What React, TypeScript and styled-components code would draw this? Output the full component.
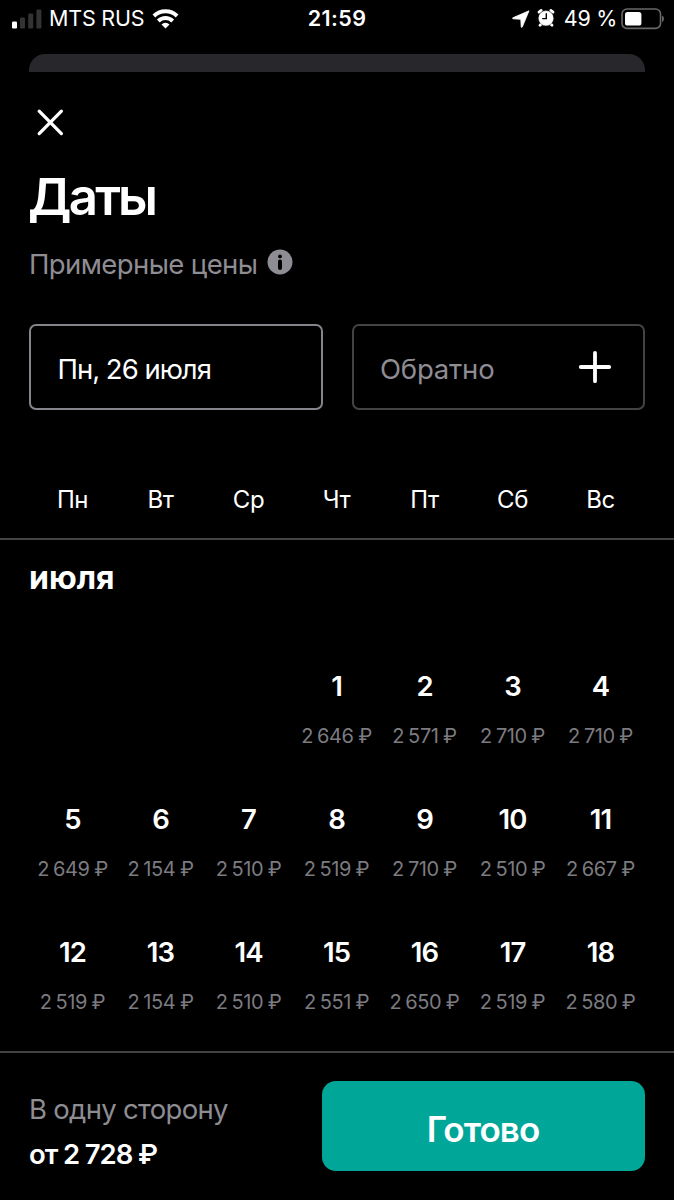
import React from "react";
import styled, { createGlobalStyle } from "styled-components";

const GlobalStyle = createGlobalStyle`
  * { box-sizing: border-box; }
  html, body { margin: 0; background: #000; }
  body { font-family: Inter, "Liberation Sans", sans-serif; color: #fff; }
`;

const Screen = styled.div`
  width: 674px;
  height: 1200px;
  display: flex;
  flex-direction: column;
  background: #000;
  overflow: hidden;
`;

const StatusBar = styled.header`
  height: 54px;
  flex: none;
  display: grid;
  grid-template-columns: 1fr auto 1fr;
  align-items: start;
  padding: 0 10px 0 12px;
`;

const StatusGroup = styled.div<{ $end?: boolean }>`
  display: flex;
  align-items: center;
  height: 37px;
  justify-content: ${(p) => (p.$end ? "flex-end" : "flex-start")};
`;

const StatusText = styled.span<{ $strong?: boolean; $spacing: number }>`
  font-size: 21.5px;
  line-height: 37px;
  font-weight: ${(p) => (p.$strong ? 600 : 400)};
  letter-spacing: ${(p) => p.$spacing}px;
  white-space: nowrap;
`;

const Clock = styled(StatusText)`
  margin-left: -2px;
`;

const Carrier = styled(StatusText)`
  margin: 0 8px 0 7px;
`;

const BatteryLevel = styled(StatusText)`
  margin: 0 4px 0 9px;
`;

const BackSheet = styled.div`
  height: 18px;
  flex: none;
  margin: 0 29px;
  border-radius: 16px 16px 0 0;
  background: #28272c;
`;

const Head = styled.section`
  flex: none;
  height: 252px;
  padding: 36px 29px 0;
  display: flex;
  flex-direction: column;
  align-items: flex-start;
`;

const CloseButton = styled.button`
  border: 0;
  padding: 0;
  margin-left: 7px;
  background: none;
  display: block;
  height: 29px;
`;

const Title = styled.h1`
  margin: 30px 0 0 -1px;
  font-size: 51px;
  line-height: 60px;
  font-weight: 620;
  letter-spacing: -2.8px;
`;

const Subtitle = styled.div`
  display: flex;
  align-items: center;
  gap: 10px;
  height: 40px;
  margin-top: 17px;
  font-size: 27.5px;
  line-height: 40px;
  color: #8e8d93;
  letter-spacing: -0.6px;

  svg { margin-top: -5px; }
`;

const Fields = styled.div`
  flex: none;
  display: grid;
  grid-template-columns: 1fr 1fr;
  gap: 29px;
  padding: 0 29px;
`;

const Field = styled.button<{ $active?: boolean }>`
  height: 86px;
  display: flex;
  align-items: center;
  justify-content: space-between;
  padding: 0 30px 0 26.5px;
  border: 2px solid ${(p) => (p.$active ? "#85848a" : "#434345")};
  border-radius: 7px;
  background: #000;
  color: ${(p) => (p.$active ? "#fff" : "#8e8d93")};
  font: 400 27.5px/40px Inter, sans-serif;
  letter-spacing: ${(p) => (p.$active ? -1 : -0.2)}px;
`;

const FieldLabel = styled.span`
  padding-top: 4px;
`;

const Week = styled.div`
  flex: none;
  height: 130px;
  padding: 70px 29.5px 0 28.5px;
  display: grid;
  grid-template-columns: repeat(7, 1fr);
  border-bottom: 2px solid #434345;
`;

const WeekDay = styled.span`
  text-align: center;
  font-size: 24px;
  line-height: 40px;
  letter-spacing: -0.4px;
`;

const Month = styled.h2`
  flex: none;
  margin: 0;
  padding: 18px 29px 0;
  height: 109px;
  font-size: 32px;
  line-height: 40px;
  font-weight: 650;
  letter-spacing: 0;
`;

const Days = styled.div`
  flex: 1;
  min-height: 0;
  display: grid;
  grid-template-columns: repeat(7, 1fr);
  grid-auto-rows: 133px;
  padding: 0 29.5px 0 28.5px;
  overflow: hidden;
`;

const Day = styled.div<{ $start?: number }>`
  grid-column-start: ${(p) => p.$start ?? "auto"};
  display: flex;
  flex-direction: column;
  align-items: center;
  padding-top: 17px;
`;

const DayNumber = styled.span`
  font-size: 27.5px;
  line-height: 40px;
  font-weight: 600;
  letter-spacing: -0.9px;
`;

const Price = styled.span`
  margin-top: 15px;
  font-size: 20px;
  line-height: 30px;
  color: #7c7b80;
  white-space: nowrap;
  letter-spacing: -0.4px;
  word-spacing: -1.2px;
`;

const Currency = styled.span`
  margin-left: 0.5px;
`;

const Footer = styled.footer`
  flex: none;
  height: 149px;
  border-top: 2px solid #434345;
  padding: 28px 29px 0;
  display: flex;
  justify-content: space-between;
`;

const Total = styled.div`
  display: flex;
  flex-direction: column;
  padding-top: 8px;
  font-size: 27.5px;
  line-height: 40px;
`;

const TripKind = styled.span`
  color: #8e8d93;
  letter-spacing: -0.7px;
`;

const TotalPrice = styled.span`
  margin-top: 5px;
  font-weight: 620;
  letter-spacing: -1.1px;
`;

const DoneButton = styled.button`
  width: 323px;
  height: 90px;
  border: 0;
  border-radius: 14px;
  background: #00a698;
  color: #fff;
  font: 600 35px/40px Inter, sans-serif;
  letter-spacing: -0.9px;
  padding: 6px 1px 0 0;
`;

const SignalIcon = () => (
  <svg width="30" height="20" viewBox="0 0 30 20">
    <rect x="0" y="12.5" width="5" height="7" rx="1.2" fill="#fff" />
    <rect x="8" y="8.5" width="5" height="11" rx="1.2" fill="#333" />
    <rect x="16.2" y="4.5" width="5" height="15" rx="1.2" fill="#333" />
    <rect x="24.4" y="0.5" width="5" height="19" rx="1.2" fill="#333" />
  </svg>
);

const WifiIcon = () => (
  <svg width="27" height="20" viewBox="0 0 27 20" fill="none" stroke="#fff" strokeWidth="3.9">
    <path d="M1.9 7a16.6 16.6 0 0 1 23.2 0" />
    <path d="M6.3 12a10.2 10.2 0 0 1 14.4 0" />
    <path d="M13.5 19.6l-4-4.1a5.7 5.7 0 0 1 8 0z" fill="#fff" stroke="none" />
  </svg>
);

const LocationIcon = () => (
  <svg width="18" height="18" viewBox="0 0 18 18">
    <path d="M17 .8L.8 7.8q-.8.7.3 1l7.7.5.4 7.6q.4 1.1 1.1.1z" fill="#fff" stroke="#fff" strokeWidth="0.8" strokeLinejoin="round" />
  </svg>
);

const AlarmIcon = styled(({ className }: { className?: string }) => (
  <svg className={className} width="18" height="20" viewBox="0 0 18 20">
    <g stroke="#fff" strokeWidth="2.8" strokeLinecap="round">
      <path d="M2 4.2l2.2-1.8M16 4.2l-2.2-1.8M3 17.2l2-2M15 17.2l-2-2" />
    </g>
    <circle cx="9" cy="10.2" r="7.7" fill="#fff" stroke="#000" strokeWidth="0.4" />
    <path d="M9.3 5.2v5.4H5.2" fill="none" stroke="#000" strokeWidth="1.4" />
  </svg>
))`
  margin: -2px 0 0 7px;
`;

const BatteryIcon = () => (
  <svg width="43" height="22" viewBox="0 0 43 22">
    <rect x="1" y="1" width="38.5" height="19.4" rx="5" fill="none" stroke="#68686a" strokeWidth="1.6" />
    <rect x="4" y="4" width="16.4" height="13.6" rx="2.6" fill="#fff" />
    <path d="M41 7.4q2 .8 2 3.3t-2 3.3z" fill="#68686a" />
  </svg>
);

const CloseIcon = () => (
  <svg width="29" height="29" viewBox="0 0 29 29" stroke="#fff" strokeWidth="3.3" strokeLinecap="round">
    <path d="M3.2 3.2l22.2 22.4M25.4 3.2L3.2 25.6" />
  </svg>
);

const InfoIcon = () => (
  <svg width="26" height="26" viewBox="0 0 26 26">
    <circle cx="13" cy="13" r="12.5" fill="#8e8d93" />
    <circle cx="13" cy="7.4" r="1.9" fill="#000" />
    <path d="M13 12.6v6.4" stroke="#000" strokeWidth="4" strokeLinecap="round" />
  </svg>
);

const PlusIcon = () => (
  <svg width="36" height="36" viewBox="0 0 36 36" stroke="#fff" strokeWidth="3.8" strokeLinecap="round">
    <path d="M18 3.8v28.4M3.8 18h28.4" />
  </svg>
);

const weekDays = ["Пн", "Вт", "Ср", "Чт", "Пт", "Сб", "Вс"];

const prices = [
  "2 646", "2 571", "2 710", "2 710",
  "2 649", "2 154", "2 510", "2 519", "2 710", "2 510", "2 667",
  "2 519", "2 154", "2 510", "2 551", "2 650", "2 519", "2 580",
];

export default function App() {
  return (
    <Screen>
      <GlobalStyle />
      <StatusBar>
        <StatusGroup>
          <SignalIcon />
          <Carrier $spacing={-0.2}>MTS RUS</Carrier>
          <WifiIcon />
        </StatusGroup>
        <StatusGroup>
          <Clock $strong $spacing={0.4}>21:59</Clock>
        </StatusGroup>
        <StatusGroup $end>
          <LocationIcon />
          <AlarmIcon />
          <BatteryLevel $spacing={-0.3}>49 %</BatteryLevel>
          <BatteryIcon />
        </StatusGroup>
      </StatusBar>
      <BackSheet />
      <Head>
        <CloseButton aria-label="Закрыть"><CloseIcon /></CloseButton>
        <Title>Даты</Title>
        <Subtitle>Примерные цены <InfoIcon /></Subtitle>
      </Head>
      <Fields>
        <Field $active><FieldLabel>Пн, 26 июля</FieldLabel></Field>
        <Field><FieldLabel>Обратно</FieldLabel><PlusIcon /></Field>
      </Fields>
      <Week>
        {weekDays.map((d) => <WeekDay key={d}>{d}</WeekDay>)}
      </Week>
      <Month>июля</Month>
      <Days>
        {prices.map((price, i) => (
          <Day key={i} $start={i === 0 ? 4 : undefined}>
            <DayNumber>{i + 1}</DayNumber>
            <Price>{price} <Currency>₽</Currency></Price>
          </Day>
        ))}
      </Days>
      <Footer>
        <Total>
          <TripKind>В одну сторону</TripKind>
          <TotalPrice>от 2 728 ₽</TotalPrice>
        </Total>
        <DoneButton>Готово</DoneButton>
      </Footer>
    </Screen>
  );
}
